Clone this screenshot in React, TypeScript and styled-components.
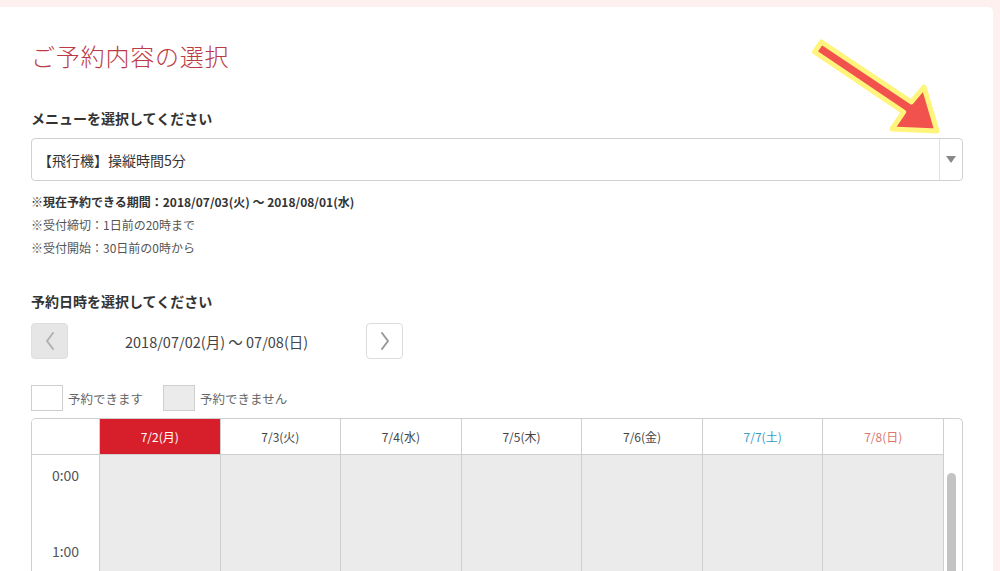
import React from "react";
import styled, { createGlobalStyle } from "styled-components";

const GlobalStyle = createGlobalStyle`
  html, body { margin: 0; padding: 0; }
  body {
    background: #fdf0ef;
    font-family: "Noto Sans CJK JP", "Noto Sans", sans-serif;
    color: #333;
    overflow: hidden;
  }
`;

const Page = styled.div`
  height: 571px;
  box-sizing: border-box;
  padding: 7px 7px 0 0;
`;

const Card = styled.main`
  position: relative;
  height: 100%;
  box-sizing: border-box;
  background: #fff;
  border-top-right-radius: 5px;
  padding: 32px 30px 0 31px;
  display: flex;
  flex-direction: column;
  overflow: hidden;
`;

const Title = styled.h1`
  margin: 0;
  font-size: 24px;
  line-height: 34px;
  font-weight: 300;
  color: #bc3a44;
  letter-spacing: 0.8px;
`;

const SectionLabel = styled.h2<{ $mt: number }>`
  margin: ${(p) => p.$mt}px 0 0;
  font-size: 14px;
  line-height: 20px;
  font-weight: 700;
  color: #333;
`;

const Select = styled.div`
  margin-top: 10px;
  height: 43px;
  box-sizing: border-box;
  border: 1px solid #d0d0d0;
  border-radius: 4px;
  display: flex;
  align-items: stretch;
`;

const SelectText = styled.div`
  flex: 1;
  display: flex;
  align-items: center;
  padding-left: 6px;
  font-size: 14px;
  color: #333;
`;

const SelectArrow = styled.div`
  width: 22px;
  border-left: 1px solid #e0e0e0;
  display: flex;
  align-items: center;
  justify-content: center;
  &::after {
    content: "";
    border-left: 5px solid transparent;
    border-right: 5px solid transparent;
    border-top: 7px solid #888;
  }
`;

const Notes = styled.div`
  margin-top: 9px;
  font-size: 12px;
  line-height: 23px;
  color: #555;
`;

const NoteLine = styled.div<{ $strong?: boolean }>`
  font-weight: ${(p) => (p.$strong ? 700 : 400)};
  color: ${(p) => (p.$strong ? "#333" : "#555")};
`;

const NavRow = styled.div`
  margin-top: 12px;
  display: flex;
  align-items: center;
  height: 36px;
`;

const NavButton = styled.button<{ $disabled?: boolean }>`
  width: 37px;
  height: 36px;
  box-sizing: border-box;
  padding: 0;
  border: 1px solid ${(p) => (p.$disabled ? "#dedede" : "#dcdcdc")};
  border-radius: 4px;
  background: ${(p) => (p.$disabled ? "#e6e6e6" : "#fff")};
  display: flex;
  align-items: center;
  justify-content: center;
  color: ${(p) => (p.$disabled ? "#b0b0b0" : "#999")};
`;

const DateRange = styled.div`
  width: 298px;
  box-sizing: border-box;
  padding-left: 57px;
  font-size: 14.5px;
  color: #444;
`;

const Legend = styled.div`
  margin-top: 26px;
  display: flex;
  align-items: center;
  gap: 20px;
`;

const LegendItem = styled.div`
  display: flex;
  align-items: center;
  gap: 5px;
`;

const LegendBox = styled.span<{ $bg: string }>`
  width: 32px;
  height: 26px;
  box-sizing: border-box;
  border: 1px solid #cfcfcf;
  background: ${(p) => p.$bg};
`;

const LegendText = styled.span`
  font-size: 12.5px;
  color: #666;
`;

const Table = styled.div`
  margin-top: 7px;
  flex: 1;
  border: 1px solid #cfcfcf;
  border-bottom: none;
  border-radius: 5px 5px 0 0;
  overflow: hidden;
  display: flex;
  flex-direction: column;
`;

const Row = styled.div`
  display: grid;
  grid-template-columns: 67px repeat(7, 1fr) 19px;
`;

const HeadCell = styled.div<{ $color: string; $bg: string; $first?: boolean }>`
  height: 35px;
  border-bottom: 1px solid #cfcfcf;
  border-left: ${(p) => (p.$first ? "none" : "1px solid #cfcfcf")};
  background: ${(p) => p.$bg};
  color: ${(p) => p.$color};
  display: flex;
  align-items: center;
  justify-content: center;
  font-size: 12px;
`;

const HeadSpacer = styled.div`
  border-left: 1px solid #cfcfcf;
`;

const Body = styled.div`
  flex: 1;
  display: grid;
  grid-template-columns: 67px repeat(7, 1fr) 19px;
`;

const TimeColumn = styled.div`
  display: flex;
  flex-direction: column;
  background: #fff;
`;

const TimeCell = styled.div`
  height: 76px;
  box-sizing: border-box;
  padding-top: 11px;
  text-align: center;
  font-size: 14px;
  line-height: 18px;
  color: #555;
`;

const DayColumn = styled.div`
  background: #ebebeb;
  border-left: 1px solid #cfcfcf;
`;

const ScrollTrack = styled.div`
  border-left: 1px solid #cfcfcf;
  background: #fff;
  padding: 18px 0 0 3px;
`;

const ScrollThumb = styled.div`
  width: 9px;
  height: 200px;
  border-radius: 5px;
  background: #c3c3c3;
`;

const ArrowOverlay = styled.svg`
  position: absolute;
  left: 800px;
  top: 30px;
  width: 150px;
  height: 110px;
  pointer-events: none;
`;

const Chevron = ({ dir }: { dir: "left" | "right" }) => (
  <svg width="12" height="20" viewBox="0 0 12 20" fill="none">
    <polyline
      points={dir === "left" ? "9,2 3,10 9,18" : "3,2 9,10 3,18"}
      stroke="currentColor"
      strokeWidth="2"
      strokeLinecap="round"
      strokeLinejoin="round"
    />
  </svg>
);

const days = [
  { label: "7/2(月)", color: "#fff", bg: "#d61f2b" },
  { label: "7/3(火)", color: "#444", bg: "#fff" },
  { label: "7/4(水)", color: "#444", bg: "#fff" },
  { label: "7/5(木)", color: "#444", bg: "#fff" },
  { label: "7/6(金)", color: "#444", bg: "#fff" },
  { label: "7/7(土)", color: "#3a9bc6", bg: "#fff" },
  { label: "7/8(日)", color: "#d9786b", bg: "#fff" },
];

const arrowPoints =
  "814.6,52 903.6,112 892,129 937,131 924,87 911.4,102 821.4,42";

export default function App() {
  return (
    <>
      <GlobalStyle />
      <Page>
        <Card>
          <Title>ご予約内容の選択</Title>
          <SectionLabel $mt={35}>メニューを選択してください</SectionLabel>
          <Select>
            <SelectText>【飛行機】操縦時間5分</SelectText>
            <SelectArrow />
          </Select>
          <Notes>
            <NoteLine $strong>
              ※現在予約できる期間：2018/07/03(火) ～ 2018/08/01(水)
            </NoteLine>
            <NoteLine>※受付締切：1日前の20時まで</NoteLine>
            <NoteLine>※受付開始：30日前の0時から</NoteLine>
          </Notes>
          <SectionLabel $mt={32}>予約日時を選択してください</SectionLabel>
          <NavRow>
            <NavButton $disabled aria-label="前の週">
              <Chevron dir="left" />
            </NavButton>
            <DateRange>2018/07/02(月) ～ 07/08(日)</DateRange>
            <NavButton aria-label="次の週">
              <Chevron dir="right" />
            </NavButton>
          </NavRow>
          <Legend>
            <LegendItem>
              <LegendBox $bg="#fff" />
              <LegendText>予約できます</LegendText>
            </LegendItem>
            <LegendItem>
              <LegendBox $bg="#ebebeb" />
              <LegendText>予約できません</LegendText>
            </LegendItem>
          </Legend>
          <Table>
            <Row>
              <HeadCell $first $color="#444" $bg="#fff" />
              {days.map((d) => (
                <HeadCell key={d.label} $color={d.color} $bg={d.bg}>
                  {d.label}
                </HeadCell>
              ))}
              <HeadSpacer />
            </Row>
            <Body>
              <TimeColumn>
                <TimeCell>0:00</TimeCell>
                <TimeCell>1:00</TimeCell>
              </TimeColumn>
              {days.map((d) => (
                <DayColumn key={d.label} />
              ))}
              <ScrollTrack>
                <ScrollThumb />
              </ScrollTrack>
            </Body>
          </Table>
          <ArrowOverlay viewBox="800 37 150 110">
            <polygon
              points={arrowPoints}
              fill="#f2524e"
              stroke="#fff47c"
              strokeWidth="5"
              strokeLinejoin="round"
            />
          </ArrowOverlay>
        </Card>
      </Page>
    </>
  );
}
